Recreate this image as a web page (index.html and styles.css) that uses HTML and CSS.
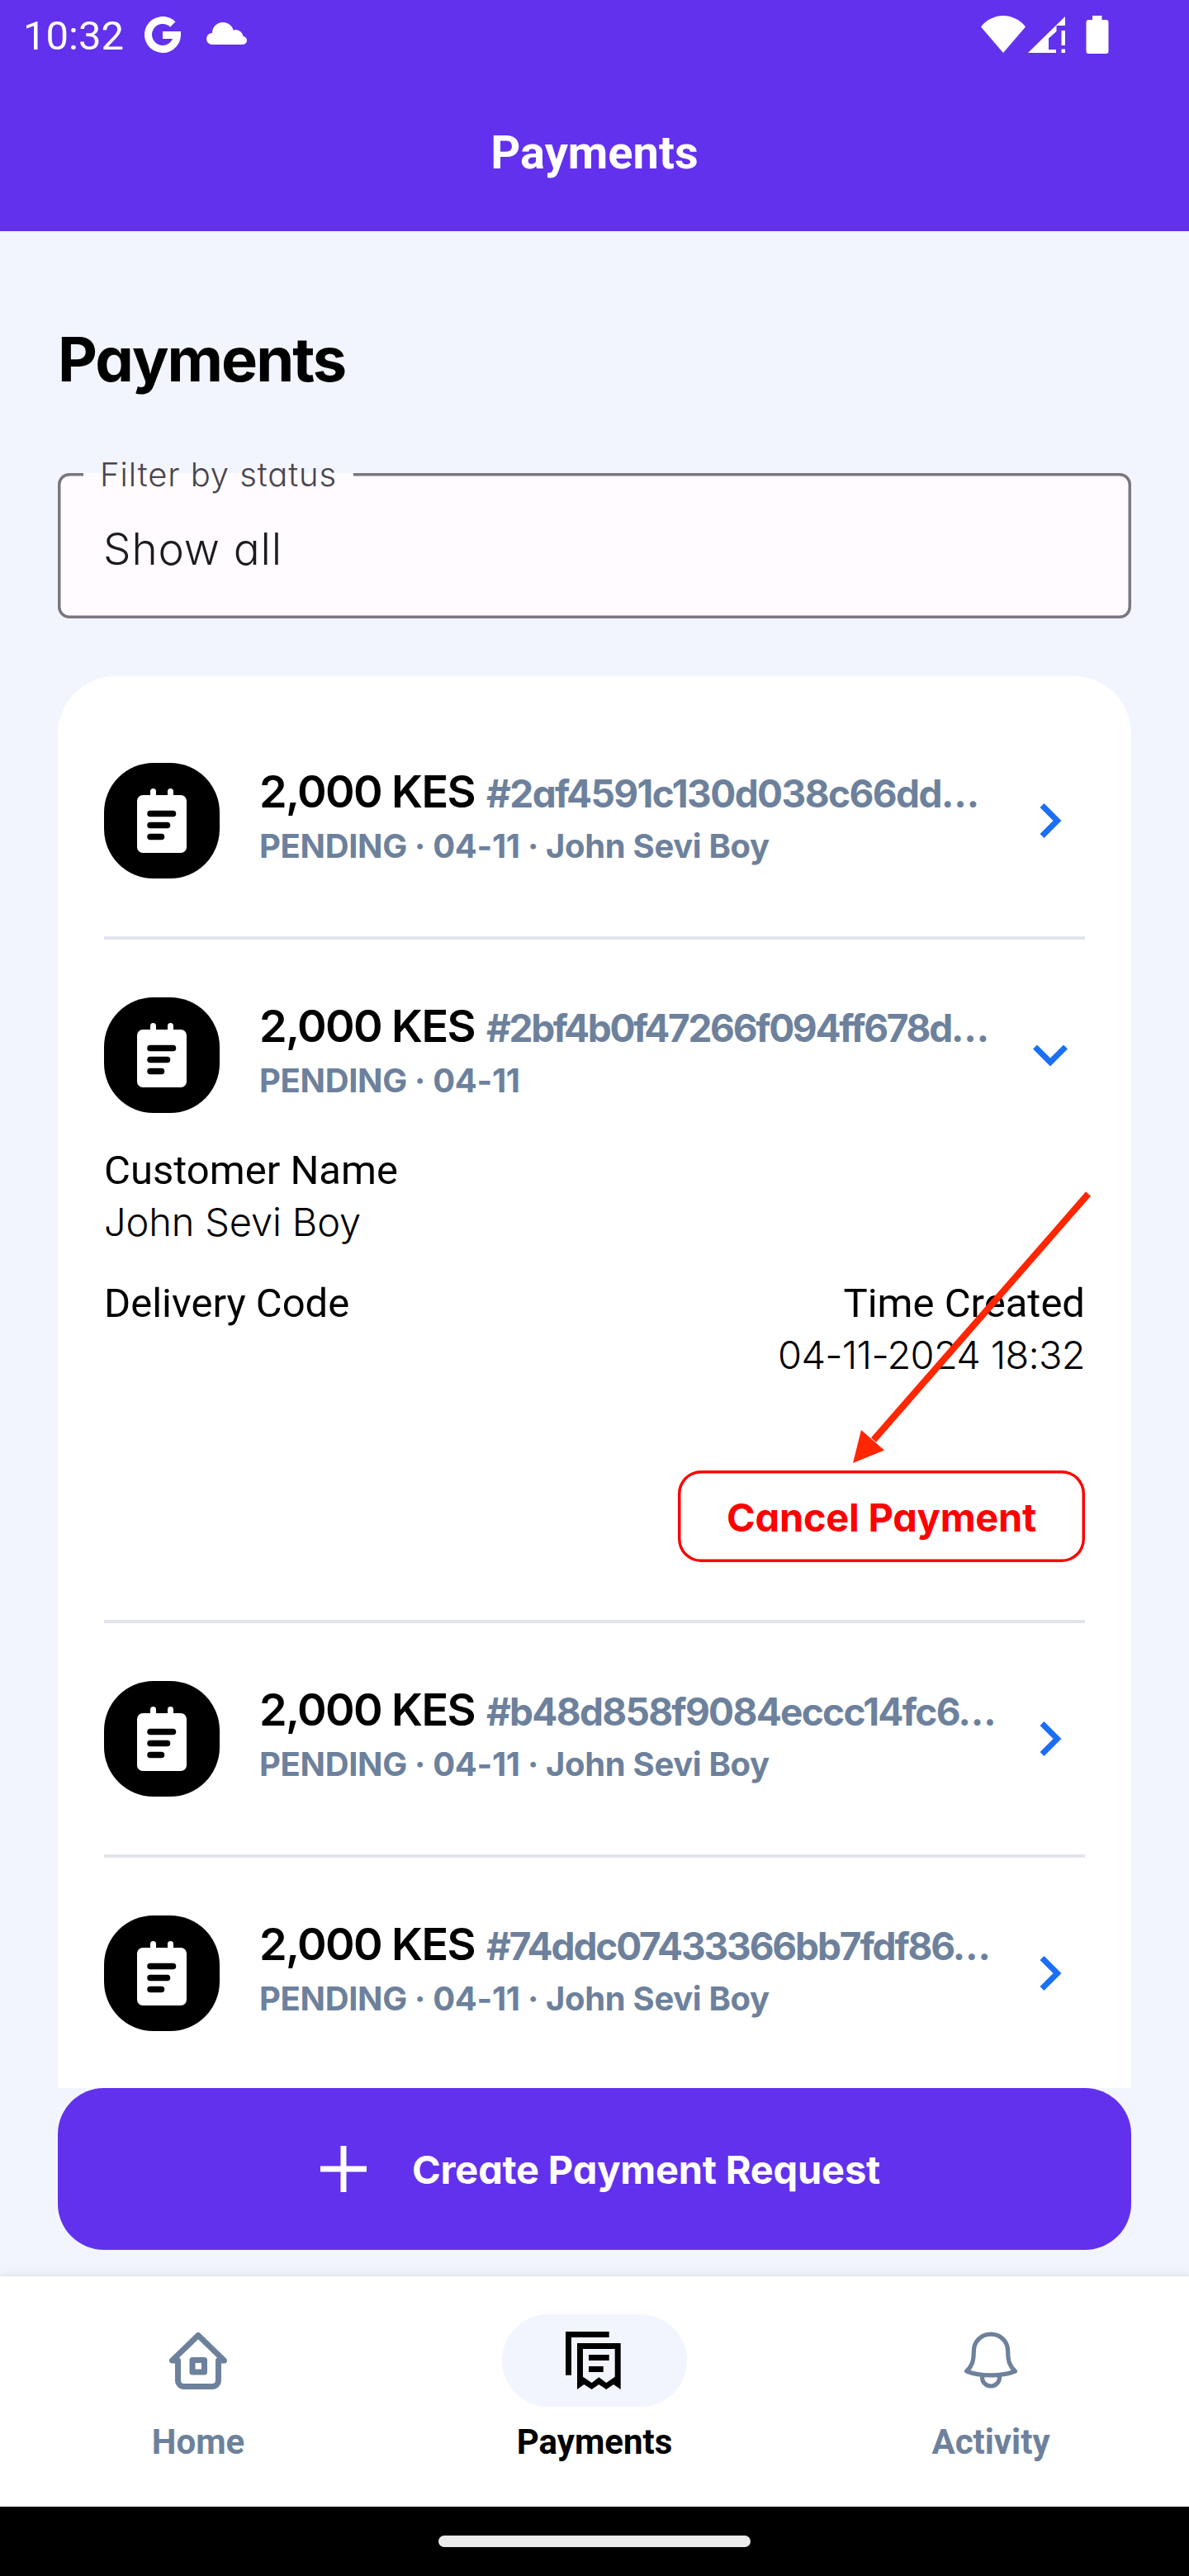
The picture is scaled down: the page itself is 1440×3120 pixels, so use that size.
FILE: index.html
```html
<!DOCTYPE html>
<html lang="en">
<head>
<meta charset="utf-8">
<title>Payments</title>
<link rel="stylesheet" href="styles.css">
</head>
<body>
<svg class="sprite" aria-hidden="true">
  <symbol id="note" viewBox="0 0 60 78">
    <path fill="#fff" d="M7 8H16V3.500a3.500 3.500 0 0 1 7 0V8H37V3.500a3.500 3.500 0 0 1 7 0V8H53a7 7 0 0 1 7 7V71a7 7 0 0 1-7 7H7a7 7 0 0 1-7-7V15a7 7 0 0 1 7-7z"/>
    <path stroke="#000" stroke-width="7.500" stroke-linecap="round" d="M16 30.500H43.500M16 44.500H36.500M16 58.500H29.500"/>
  </symbol>
  <symbol id="chevron" viewBox="0 0 42 42">
    <path fill="none" stroke="#1b6ff5" stroke-width="7" d="M11 2.500 29.500 21 11 39.500"/>
  </symbol>
</svg>
<div class="screen">
  <header class="header">
    <div class="statusbar">
      <span class="clock">10:32</span>
      <svg class="google" width="44" height="44" viewBox="0 0 44 44"><path fill="none" stroke="#fff" stroke-width="9" d="M34.300 9.500A17.500 17.500 0 1 0 39.500 22.400H22"/></svg>
      <svg class="cloud" width="50" height="44" viewBox="0 0 50 44" fill="#fff"><circle cx="20" cy="20" r="13"/><circle cx="35.500" cy="25" r="9"/><circle cx="7" cy="27" r="7"/><circle cx="44" cy="29" r="5"/><path d="M7 22H35L44 26V34H5z"/></svg>
      <svg class="wifi" width="54" height="46" viewBox="0 0 54 46"><path fill="#fff" d="M0 13.500C14-4.500 40-4.500 54 13.500L27 45z"/></svg>
      <svg class="signal" width="46" height="46" viewBox="0 0 46 46" fill="#fff"><path d="M45 1V12H34.500V19L25 27.500V41H34V45H0zM40.500 18H45V36H40.500zM40.500 40.500H45V45H40.500z"/></svg>
      <svg class="battery" width="28" height="46" viewBox="0 0 28 46"><path fill="#fff" d="M8 0H19.500V5H24.500a3 3 0 0 1 3 3V43a3 3 0 0 1-3 3H3.500a3 3 0 0 1-3-3V8a3 3 0 0 1 3-3H8z"/></svg>
    </div>
    <div class="appbar">Payments</div>
  </header>

  <main class="main">
    <h1 class="heading">Payments</h1>
    <div class="field">
      <span class="field-label">Filter by status</span>
      <span class="field-value">Show all</span>
    </div>

    <section class="card">
      <article class="item">
        <div class="row">
          <div class="badge"><svg width="60" height="78"><use href="#note"/></svg></div>
          <div class="info">
            <div class="line"><span class="amount">2,000 KES</span><span class="hash hash-a">#2af4591c130d038c66dd…</span></div>
            <div class="meta">PENDING · 04-11 · John Sevi Boy</div>
          </div>
          <svg class="chevron" width="42" height="42"><use href="#chevron"/></svg>
        </div>
      </article>

      <article class="item">
        <div class="row">
          <div class="badge"><svg width="60" height="78"><use href="#note"/></svg></div>
          <div class="info">
            <div class="line"><span class="amount">2,000 KES</span><span class="hash hash-b">#2bf4b0f47266f094ff678d…</span></div>
            <div class="meta">PENDING · 04-11</div>
          </div>
          <svg class="chevron open" width="42" height="42"><use href="#chevron"/></svg>
        </div>
        <div class="details">
          <div class="pair">
            <div class="term">Customer Name</div>
            <div class="value name">John Sevi Boy</div>
          </div>
          <div class="split">
            <div class="term">Delivery Code</div>
            <div class="pair end">
              <div class="term">Time Created</div>
              <div class="value date">04-11-2024 18:32</div>
            </div>
          </div>
          <button class="cancel">Cancel Payment</button>
          <svg class="arrow" width="300" height="340" viewBox="1025 1438 300 340"><path stroke="#ff2600" stroke-width="8" d="M1318 1446 1058 1744"/><path fill="#ff2600" d="M1033 1772 1043 1732 1071 1756.500z"/></svg>
        </div>
      </article>

      <article class="item">
        <div class="row">
          <div class="badge"><svg width="60" height="78"><use href="#note"/></svg></div>
          <div class="info">
            <div class="line"><span class="amount">2,000 KES</span><span class="hash hash-c">#b48d858f9084eccc14fc6…</span></div>
            <div class="meta">PENDING · 04-11 · John Sevi Boy</div>
          </div>
          <svg class="chevron" width="42" height="42"><use href="#chevron"/></svg>
        </div>
      </article>

      <article class="item">
        <div class="row">
          <div class="badge"><svg width="60" height="78"><use href="#note"/></svg></div>
          <div class="info">
            <div class="line"><span class="amount">2,000 KES</span><span class="hash hash-d">#74ddc07433366bb7fdf86…</span></div>
            <div class="meta">PENDING · 04-11 · John Sevi Boy</div>
          </div>
          <svg class="chevron" width="42" height="42"><use href="#chevron"/></svg>
        </div>
      </article>
    </section>

    <button class="create">
      <svg width="56" height="56" viewBox="0 0 56 56"><path stroke="#fff" stroke-width="7" d="M28 0V56M0 28H56"/></svg>
      <span>Create Payment Request</span>
    </button>
  </main>

  <nav class="nav">
    <div class="tab">
      <div class="pill"><svg width="84" height="84" viewBox="0 0 84 84" fill="none" stroke="#6d819c" stroke-width="7" stroke-linejoin="round"><path d="M42 11.500 10.500 42H17.500V66a7.500 7.500 0 0 0 7.500 7.500H59a7.500 7.500 0 0 0 7.500-7.500V42H73.500z"/><path d="M35 41.500H49.500V56H35z"/></svg></div>
      <span class="tab-label">Home</span>
    </div>
    <div class="tab active">
      <div class="pill"><svg width="84" height="84" viewBox="0 0 84 84"><path d="M7 7H59.700V14H14V59.700H7zM35 35H59.700V42H35zM35 49H52.700V56H35z"/><path fill-rule="evenodd" d="M21 21H73.700V77L65 71 56.300 77 47.300 71 38.700 77 29.300 71 21 77zM28 28V61.700L38.700 69 47.300 62.300 56.300 69 66.700 61.700V28z"/></svg></div>
      <span class="tab-label">Payments</span>
    </div>
    <div class="tab">
      <div class="pill"><svg width="84" height="84" viewBox="0 0 84 84" fill="none" stroke="#6d819c" stroke-width="5.200" stroke-linejoin="round"><path d="M42 10.200C30 10.200 21.300 19 21.300 31C21.300 43 19 49 12.600 55C29 61.500 55 61.500 71.400 55C65 49 62.700 43 62.700 31C62.700 19 54 10.200 42 10.200z"/><path d="M31.500 60V62.500a10.500 10.500 0 0 0 21 0V60"/></svg></div>
      <span class="tab-label">Activity</span>
    </div>
  </nav>
  <div class="gesture"><div class="gesture-bar"></div></div>
</div>
</body>
</html>
```
FILE: styles.css
```css
* { box-sizing: border-box; margin: 0; padding: 0; }

body {
  background: #f2f5fd;
  color: #000;
  font-family: Inter, "Open Sans", sans-serif;
  font-feature-settings: "cv11", "kern";
}

button { font: inherit; font-feature-settings: inherit; border: 0; background: none; }
svg { display: block; flex: none; }
.sprite { position: absolute; width: 0; height: 0; }

.screen { width: 1440px; height: 3120px; display: flex; flex-direction: column; overflow: hidden; }

.header { height: 280px; background: #6231ed; color: #fff; font-family: Roboto, sans-serif; }
.statusbar { height: 84px; display: flex; align-items: center; padding: 0 97px 0 28px; }
.clock { font-size: 49px; line-height: 60px; padding-top: 4px; width: 147px; }
.cloud { margin-left: 31px; }
.wifi { margin-left: auto; }
.signal { margin-left: 3px; }
.battery { margin-left: 24px; }
.appbar { height: 196px; padding-top: 6px; display: flex; align-items: center; justify-content: center; font-size: 56px; font-weight: 700; }

.main { height: 2477px; padding: 110px 70px 0; display: flex; flex-direction: column; }
.heading { font-size: 74px; line-height: 90px; font-weight: 700; letter-spacing: -2px; }

.field {
  position: relative;
  height: 176px;
  margin-top: 93px;
  padding: 8px 0 0 55px;
  display: flex;
  align-items: center;
  background: #fffbfe;
  border-radius: 14px;
  box-shadow: inset 0 0 0 3.5px #7a757f;
}
.field-label {
  position: absolute;
  left: 31px;
  top: -22px;
  width: 327px;
  padding-left: 20px;
  font-size: 40px;
  line-height: 48px;
  font-weight: 300;
  letter-spacing: 0.9px;
  color: #49454f;
  background: linear-gradient(#f2f5fd 22px, #fffbfe 22px);
}
.field-value { font-size: 53px; font-weight: 300; letter-spacing: 0.9px; color: #1c1b1f; }

.card { height: 1710px; margin-top: 70px; padding: 35px 56px 0; background: #fff; border-radius: 70px 70px 0 0; }
.item { padding: 70px 0; border-bottom: 4px solid #e1e5eb; }
.item:last-child { border-bottom: 0; }
.row { height: 140px; display: flex; align-items: center; }
.badge { width: 140px; height: 140px; flex: none; border-radius: 60px; background: #000; display: flex; align-items: center; justify-content: center; }
.info { align-self: flex-start; padding: 5px 0 0 48px; white-space: nowrap; }
.line { height: 60px; line-height: 60px; display: flex; align-items: baseline; gap: 14px; }
.amount { font-size: 54px; font-weight: 600; letter-spacing: -1.63px; }
.hash { font-size: 46px; font-weight: 650; color: #6d819c; }
.hash-a { letter-spacing: -1.57px; }
.hash-b { letter-spacing: -2.32px; }
.hash-c { letter-spacing: -1.72px; }
.hash-d { letter-spacing: -2.15px; }
.meta { margin-top: 8px; font-size: 40px; line-height: 56px; font-weight: 650; letter-spacing: -0.34px; color: #6d819c; }
.chevron { margin: 0 21px 0 auto; }
.open { transform: rotate(90deg); }

.details { position: relative; margin-top: 39px; display: flex; flex-direction: column; line-height: 62px; }
.term { font-family: Roboto, sans-serif; font-size: 49px; }
.value { font-size: 47px; font-weight: 300; }
.name { letter-spacing: -0.16px; }
.date { letter-spacing: -0.7px; }
.split { margin-top: 37px; display: flex; justify-content: space-between; }
.end { text-align: right; }
.cancel {
  align-self: flex-end;
  width: 493px;
  height: 111px;
  margin-top: 109px;
  padding-top: 3px;
  border-radius: 28px;
  box-shadow: inset 0 0 0 3.5px #f00;
  color: #f00;
  font-size: 47px;
  font-weight: 700;
  letter-spacing: -0.25px;
}
.arrow { position: absolute; right: -11px; top: 51px; }

.create {
  height: 196px;
  padding-left: 14px;
  display: flex;
  align-items: center;
  justify-content: center;
  gap: 55px;
  border-radius: 56px;
  background: #6231ed;
  color: #fff;
  font-size: 47px;
  font-weight: 700;
  letter-spacing: -0.2px;
}

.nav { height: 279px; padding-top: 46px; display: grid; grid-template-columns: repeat(3, 1fr); background: #fff; box-shadow: 0 -1px 2px #dde0e8, 0 -4px 12px rgba(60, 70, 100, 0.06); }
.tab { display: flex; flex-direction: column; align-items: center; color: #6d819c; }
.pill { width: 224px; height: 112px; border-radius: 56px; display: flex; align-items: center; justify-content: center; }
.active { color: #000; }
.active .pill { background: #f2f5fd; }
.tab-label { margin-top: 18px; font: 700 42px/50px Roboto, sans-serif; }

.gesture { height: 84px; background: #000; display: flex; align-items: center; justify-content: center; }
.gesture-bar { width: 378px; height: 14px; border-radius: 7px; background: #ebebeb; }
```
